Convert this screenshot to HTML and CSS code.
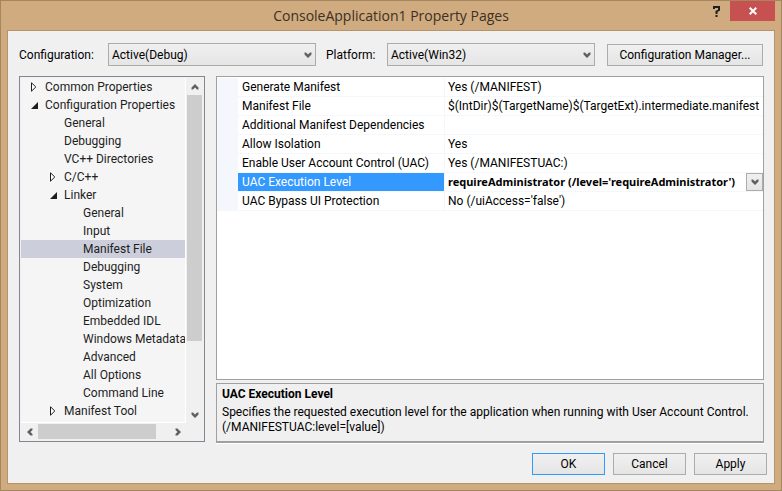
FILE: index.html
```html
<!DOCTYPE html>
<html lang="en">
<head>
<meta charset="utf-8">
<meta name="viewport" content="width=device-width, initial-scale=1">
<title>ConsoleApplication1 Property Pages</title>
<link rel="stylesheet" href="styles.css">
</head>
<body>
<svg width="0" height="0" class="defs" aria-hidden="true">
  <symbol id="chevron" viewBox="0 0 8 6"><path d="M.5 .5h1.500L4 2.500 6 .5h1.500v2L4 6 .5 2.500z"/></symbol>
  <symbol id="closed" viewBox="0 0 6 10"><path d="M.5 .8v8.400L4.800 5z" fill="#fff" stroke="#1e1e1e"/></symbol>
  <symbol id="open" viewBox="0 0 7 7"><path d="M7 0v7H0z" fill="#1e1e1e"/></symbol>
</svg>
<div class="window">
  <header class="titlebar">
    <h1>ConsoleApplication1 Property Pages</h1>
    <div class="caption-buttons">
      <button class="help" type="button" aria-label="Help"><svg width="7" height="11" viewBox="0 0 7 11"><path d="M1 3V1h5v3L3.500 5.500V8" fill="none" stroke="#1e1e1e" stroke-width="2"/><path d="M2.500 9h2v2h-2z" fill="#1e1e1e"/></svg></button>
      <button class="close" type="button" aria-label="Close"><svg width="8" height="8" viewBox="0 0 8 8"><path d="M.7 .7l6.600 6.600M7.300 .7L.7 7.300" stroke="#fff" stroke-width="2"/></svg></button>
    </div>
  </header>
  <main class="client">
    <div class="toolbar">
      <label class="config-label" for="config">Configuration:</label>
      <div class="combo">
        <select id="config"><option>Active(Debug)</option></select>
        <svg class="arrow" width="8" height="6"><use href="#chevron"/></svg>
      </div>
      <label class="platform-label" for="platform">Platform:</label>
      <div class="combo">
        <select id="platform"><option>Active(Win32)</option></select>
        <svg class="arrow" width="8" height="6"><use href="#chevron"/></svg>
      </div>
      <button class="button manager" type="button">Configuration Manager...</button>
    </div>
    <div class="panes">
      <nav class="tree" aria-label="Property categories">
        <ul class="nodes">
          <li><span class="node"><svg class="twist" width="6" height="10"><use href="#closed"/></svg>Common Properties</span></li>
          <li><span class="node"><svg class="twist" width="7" height="7"><use href="#open"/></svg>Configuration Properties</span>
            <ul>
              <li><span class="node">General</span></li>
              <li><span class="node">Debugging</span></li>
              <li><span class="node">VC++ Directories</span></li>
              <li><span class="node"><svg class="twist" width="6" height="10"><use href="#closed"/></svg>C/C++</span></li>
              <li><span class="node"><svg class="twist" width="7" height="7"><use href="#open"/></svg>Linker</span>
                <ul>
                  <li><span class="node">General</span></li>
                  <li><span class="node">Input</span></li>
                  <li><span class="node selected">Manifest File</span></li>
                  <li><span class="node">Debugging</span></li>
                  <li><span class="node">System</span></li>
                  <li><span class="node">Optimization</span></li>
                  <li><span class="node">Embedded IDL</span></li>
                  <li><span class="node">Windows Metadata</span></li>
                  <li><span class="node">Advanced</span></li>
                  <li><span class="node">All Options</span></li>
                  <li><span class="node">Command Line</span></li>
                </ul>
              </li>
              <li><span class="node"><svg class="twist" width="6" height="10"><use href="#closed"/></svg>Manifest Tool</span></li>
            </ul>
          </li>
        </ul>
        <div class="scroll vertical">
          <button type="button" aria-label="Scroll up"><svg class="up" width="8" height="6"><use href="#chevron"/></svg></button>
          <div class="track"><div class="thumb"></div></div>
          <button type="button" aria-label="Scroll down"><svg width="8" height="6"><use href="#chevron"/></svg></button>
        </div>
        <div class="scroll horizontal">
          <button type="button" aria-label="Scroll left"><svg class="left" width="8" height="6"><use href="#chevron"/></svg></button>
          <div class="track"><div class="thumb"></div></div>
          <button type="button" aria-label="Scroll right"><svg class="right" width="8" height="6"><use href="#chevron"/></svg></button>
        </div>
      </nav>
      <div class="details">
        <div class="grid">
          <table>
            <tbody>
              <tr><td class="gutter"></td><th scope="row">Generate Manifest</th><td>Yes (/MANIFEST)</td></tr>
              <tr><td class="gutter"></td><th scope="row">Manifest File</th><td>$(IntDir)$(TargetName)$(TargetExt).intermediate.manifest</td></tr>
              <tr><td class="gutter"></td><th scope="row">Additional Manifest Dependencies</th><td></td></tr>
              <tr><td class="gutter"></td><th scope="row">Allow Isolation</th><td>Yes</td></tr>
              <tr><td class="gutter"></td><th scope="row">Enable User Account Control (UAC)</th><td>Yes (/MANIFESTUAC:)</td></tr>
              <tr class="current"><td class="gutter"></td><th scope="row"><label for="level">UAC Execution Level</label></th><td>
                <div class="cell-combo">
                  <select id="level"><option>requireAdministrator (/level='requireAdministrator')</option></select>
                  <span class="drop"><svg width="8" height="6"><use href="#chevron"/></svg></span>
                </div></td></tr>
              <tr><td class="gutter"></td><th scope="row">UAC Bypass UI Protection</th><td>No (/uiAccess='false')</td></tr>
            </tbody>
          </table>
        </div>
        <section class="description">
          <h2>UAC Execution Level</h2>
          <p>Specifies the requested execution level for the application when running with User Account Control. (/MANIFESTUAC:level=[value])</p>
        </section>
      </div>
    </div>
    <footer class="actions">
      <button class="button default" type="button">OK</button>
      <button class="button" type="button">Cancel</button>
      <button class="button" type="button">Apply</button>
    </footer>
  </main>
</div>
</body>
</html>
```
FILE: styles.css
```css
* { box-sizing: border-box; }

body {
  margin: 0;
  color: #000;
  font: 12px/18px "Segoe UI", Roboto, sans-serif;
}

h1, h2, p, ul { margin: 0; padding: 0; }
ul { list-style: none; }
button, select { font: inherit; color: inherit; border-radius: 0; margin: 0; }
svg { display: block; fill: #606060; }
.defs { position: absolute; }

.window {
  display: flex;
  flex-direction: column;
  min-height: 100vh;
  padding: 0 6px 6px;
  background: #cfab7f;
  border: 1px solid #a5865f;
}

.titlebar {
  display: grid;
  grid-template-columns: 1fr auto 1fr;
  height: 29px;
}
.titlebar h1 {
  grid-column: 2;
  color: #3b3024;
  font-family: "Segoe UI", "Open Sans", sans-serif;
  font-size: 14px;
  font-weight: 400;
  line-height: 29px;
}
.caption-buttons { display: flex; justify-content: flex-end; align-items: flex-start; }
.caption-buttons button {
  display: flex;
  align-items: center;
  justify-content: center;
  height: 20px;
  padding: 0;
  border: 0;
  background: none;
}
.caption-buttons .help { width: 28px; }
.caption-buttons .close { width: 45px; background: #c75050; }

.client {
  flex: 1;
  display: flex;
  flex-direction: column;
  padding: 12px 11px 8px;
  background: #f0f0f0;
  border: 1px solid #b4946c;
}

.toolbar { display: flex; align-items: flex-end; }
.toolbar label { line-height: 22px; }
.config-label { width: 89px; }
.platform-label { width: 71px; padding-left: 10px; }
.combo { flex: 1; display: grid; align-items: center; }
.combo > * { grid-area: 1 / 1; }
.combo select {
  width: 100%;
  height: 23px;
  padding: 0 24px 0 3px;
  appearance: none;
  background: linear-gradient(#f0f0f0, #e5e5e5);
  border: 1px solid #acacac;
}
.combo .arrow { justify-self: end; margin-right: 4px; pointer-events: none; }

.button {
  width: 73px;
  height: 22px;
  padding: 0;
  line-height: 20px;
  background: linear-gradient(#f0f0f0, #e5e5e5);
  border: 1px solid #acacac;
}
.manager { width: 156px; margin-left: 12px; }
.default { border-color: #3399ff; }

.panes { flex: 1; display: flex; gap: 11px; margin-top: 10px; }

.tree {
  display: grid;
  grid-template: 1fr 17px / 1fr 17px;
  width: 186px;
  padding: 1px;
  color: #1e1e1e;
  background: #f0f0f0;
  border: 1px solid #828790;
}
.nodes { overflow: hidden; background: #f5f5f5; border: solid #fff; border-width: 0 1px 1px 0; }
.node {
  display: flex;
  align-items: center;
  height: 18px;
  padding-left: 24px;
  white-space: nowrap;
}
.twist { position: absolute; margin-left: -14px; }
.nodes ul .node { padding-left: 43px; }
.nodes ul ul .node { padding-left: 62px; }
.selected { background: #cccedb; }

.scroll { display: flex; align-items: center; }
.vertical { flex-direction: column; }
.scroll button {
  display: flex;
  align-items: center;
  justify-content: center;
  flex: none;
  width: 17px;
  height: 17px;
  padding: 0;
  background: none;
  border: 0;
}
.track { flex: 1; display: flex; }
.vertical .track { flex-direction: column; }
.thumb { background: #cdcdcd; }
.vertical .thumb { width: 15px; height: 79%; }
.horizontal .thumb { width: 90%; height: 15px; }
.up { transform: rotate(180deg); }
.left { transform: rotate(90deg); }
.right { transform: rotate(-90deg); }

.details { flex: 1; display: flex; flex-direction: column; gap: 3px; min-width: 0; margin: 0 -1px -1px 0; }
.grid { flex: 1; padding-top: 1px; background: #fff; border: 1px solid #a0a0a0; }
table { width: 100%; table-layout: fixed; border-collapse: separate; border-spacing: 0; }
td, th {
  height: 19px;
  padding: 0 0 0 3px;
  overflow: hidden;
  font-weight: 400;
  text-align: left;
  white-space: nowrap;
  border-bottom: 1px solid #f4f7fc;
}
th { width: 207px; padding-left: 4px; border-right: 1px solid #f4f7fc; }
.gutter { width: 21px; background: #f4f7fc; }
.current th { color: #fff; background: #3399ff; background-clip: padding-box; }
.cell-combo { display: flex; height: 18px; }
.cell-combo select {
  flex: 1;
  min-width: 0;
  padding: 0;
  appearance: none;
  font-family: "Segoe UI", "Noto Sans", sans-serif;
  font-size: 11px;
  font-weight: 700;
  background: none;
  border: 0;
}
.drop {
  display: flex;
  align-items: center;
  justify-content: center;
  width: 17px;
  background: linear-gradient(#f0f0f0, #e5e5e5);
  border: 1px solid #acacac;
}

.description {
  min-height: 60px;
  padding: 1px 5px;
  border: 1px solid #a0a0a0;
  border-bottom-width: 2px;
  box-shadow: 0 1px #fff;
}
.description h2 { font-size: 12px; font-weight: 700; }
.description p { margin-top: 2px; line-height: 15px; }

.actions { display: flex; justify-content: flex-end; gap: 8px; margin: 11px -4px 0 0; }
```
